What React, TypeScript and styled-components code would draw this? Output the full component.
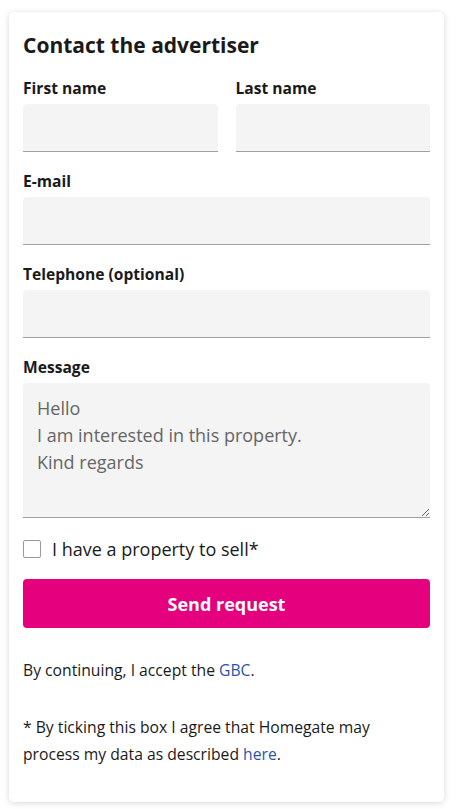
import React from "react";
import styled, { createGlobalStyle } from "styled-components";

const Global = createGlobalStyle`
  html, body { margin: 0; padding: 0; background: #ffffff; }
  body { font-family: "Open Sans", "Noto Sans", sans-serif; color: #1a1a1a; }
  * { box-sizing: border-box; }
`;

const Page = styled.div`
  padding: 12px 12px 8px 9px;
  width: 456px;
`;

const Card = styled.form`
  width: 435px;
  background: #fff;
  border-radius: 5px;
  box-shadow: 0 1px 6px rgba(0, 0, 0, 0.16);
  padding: 18px 14px 34px 14px;
  display: flex;
  flex-direction: column;
`;

const Title = styled.h2`
  margin: 0 0 17px 0;
  font-size: 21px;
  line-height: 30px;
  font-weight: 700;
  color: #1a1a1a;
`;

const Row = styled.div`
  display: grid;
  grid-template-columns: 1fr 1fr;
  column-gap: 18px;
`;

const Field = styled.label`
  display: flex;
  flex-direction: column;
  margin-bottom: 18px;
`;

const Label = styled.span`
  font-size: 15.6px;
  line-height: 22px;
  font-weight: 700;
  margin-bottom: 5px;
`;

const Input = styled.input`
  height: 48px;
  width: 100%;
  border: none;
  border-bottom: 1px solid #a0a0a0;
  border-radius: 4px 4px 0 0;
  background: #f4f4f4;
  font-family: inherit;
  font-size: 18px;
  padding: 0 14px;
  outline: none;
`;

const TextArea = styled.textarea`
  height: 135px;
  width: 100%;
  border: none;
  border-bottom: 1px solid #a0a0a0;
  border-radius: 4px 4px 0 0;
  background: #f4f4f4;
  font-family: inherit;
  font-size: 18px;
  line-height: 27px;
  color: #666;
  padding: 12px 14px;
  resize: vertical;
  outline: none;
`;

const CheckRow = styled.label`
  display: flex;
  align-items: center;
  gap: 11px;
  font-size: 18px;
  line-height: 26px;
  color: #1a1a1a;
`;

const Box = styled.span`
  width: 18px;
  height: 18px;
  border: 1px solid #9a9a9a;
  border-radius: 2px;
  background: #fff;
  flex: none;
`;

const Button = styled.button`
  margin-top: 17px;
  height: 49px;
  width: 100%;
  border: none;
  border-radius: 4px;
  background: #e5007d;
  color: #fff;
  font-family: inherit;
  font-size: 18px;
  font-weight: 700;
`;

const Note = styled.p<{ $top: number }>`
  margin: ${(p) => p.$top}px 0 0 0;
  font-size: 15.7px;
  line-height: 27px;
  color: #1a1a1a;
`;

const Link = styled.a`
  color: #2b54a8;
  text-decoration: none;
`;

export default function App() {
  return (
    <Page>
      <Global />
      <Card onSubmit={(e) => e.preventDefault()}>
        <Title>Contact the advertiser</Title>
        <Row>
          <Field>
            <Label>First name</Label>
            <Input type="text" />
          </Field>
          <Field>
            <Label>Last name</Label>
            <Input type="text" />
          </Field>
        </Row>
        <Field>
          <Label>E-mail</Label>
          <Input type="email" />
        </Field>
        <Field>
          <Label>Telephone (optional)</Label>
          <Input type="tel" />
        </Field>
        <Field>
          <Label>Message</Label>
          <TextArea
            defaultValue={"Hello\nI am interested in this property.\nKind regards"}
          />
        </Field>
        <CheckRow>
          <Box />
          I have a property to sell*
        </CheckRow>
        <Button type="submit">Send request</Button>
        <Note $top={29}>
          By continuing, I accept the <Link href="#">GBC</Link>.
        </Note>
        <Note $top={30}>
          * By ticking this box I agree that Homegate may process my data as
          described <Link href="#">here</Link>.
        </Note>
      </Card>
    </Page>
  );
}
